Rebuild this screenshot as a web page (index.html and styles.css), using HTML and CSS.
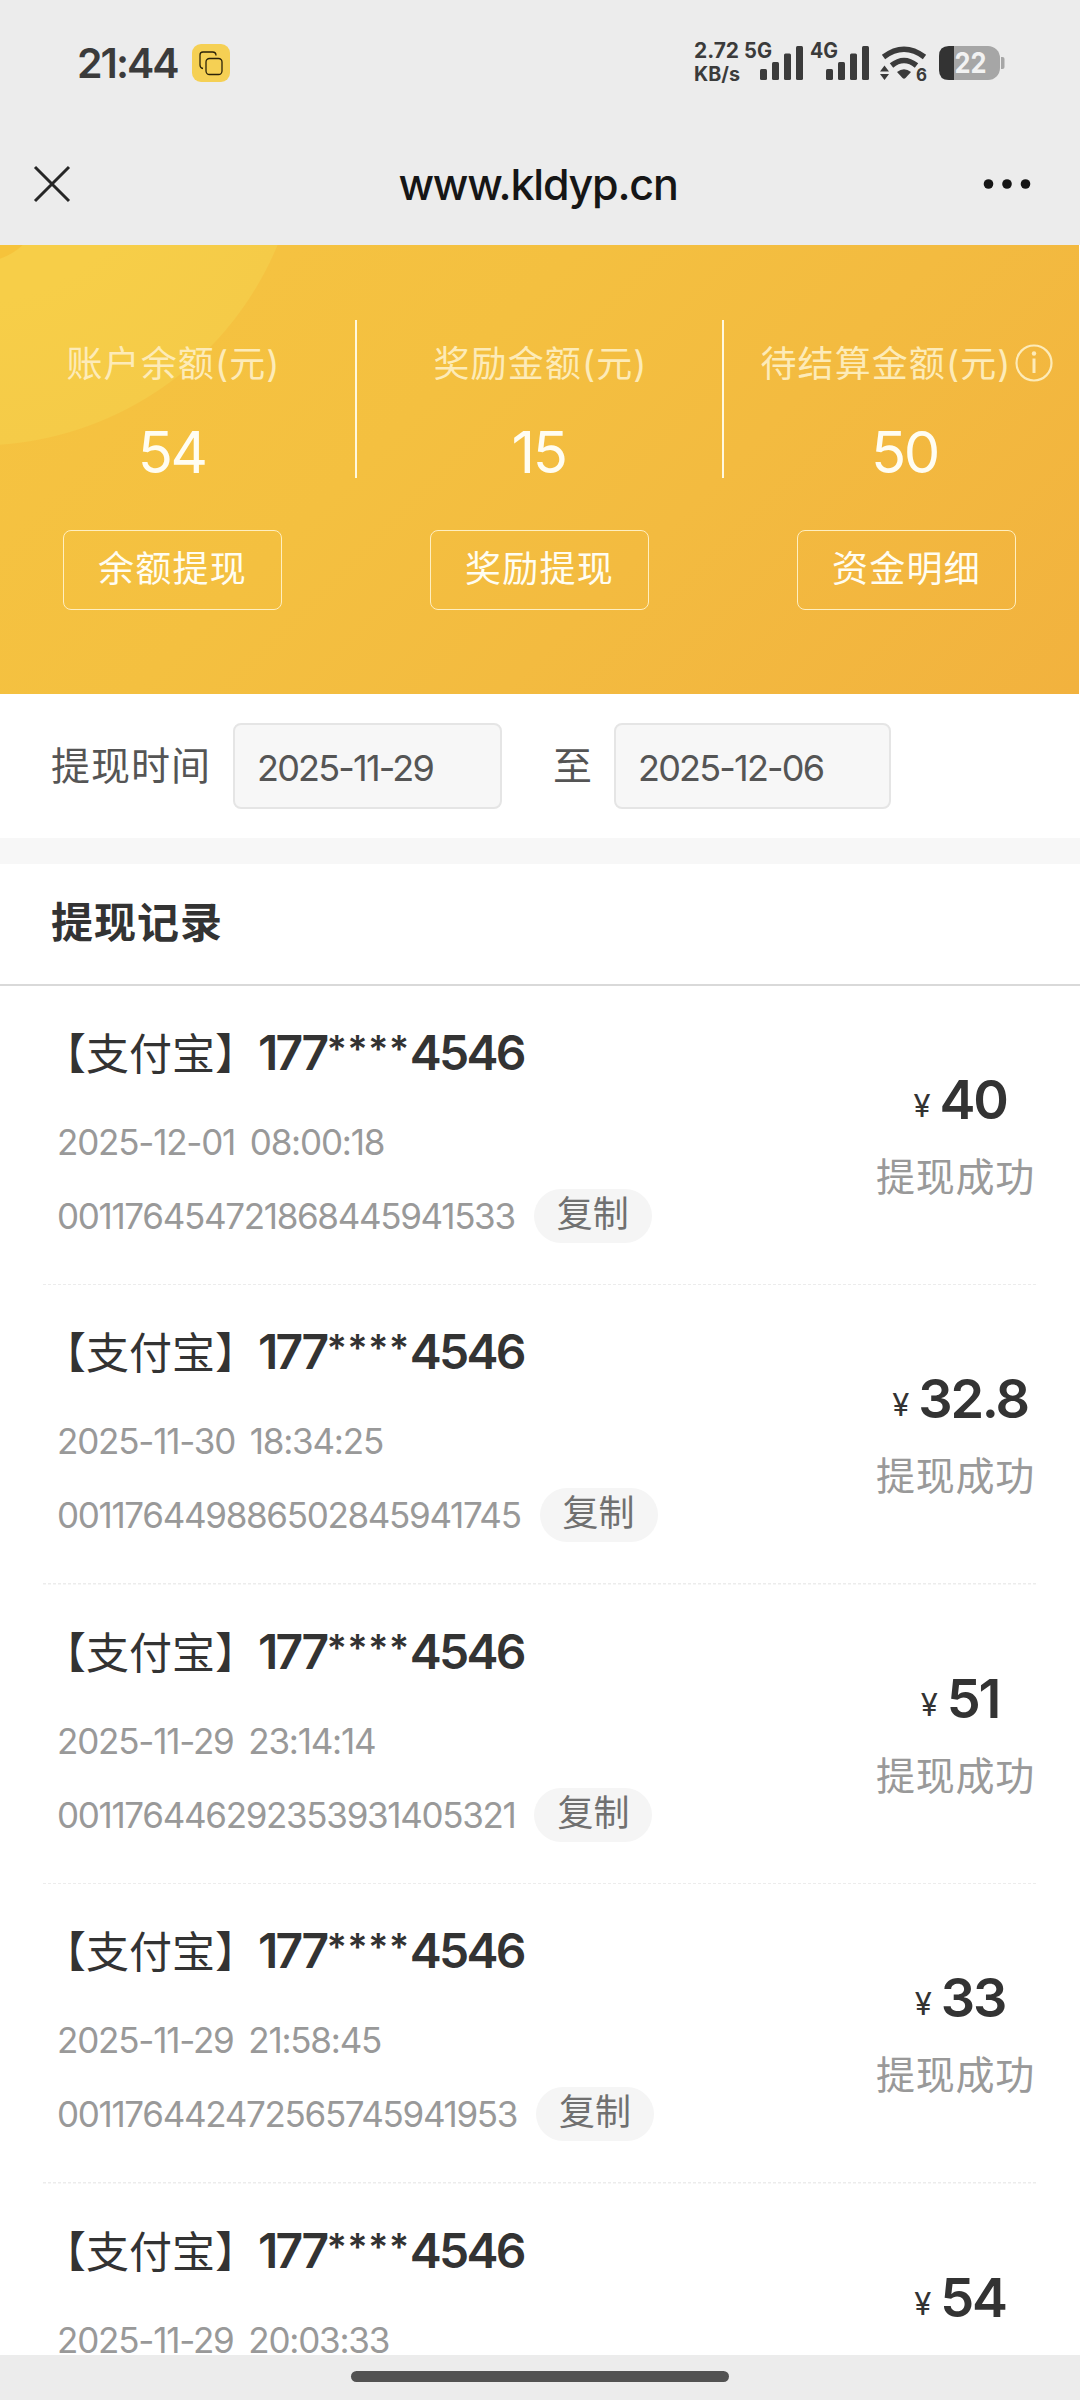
FILE: index.html
```html
<!DOCTYPE html>
<html lang="zh-CN">
<head>
<meta charset="utf-8">
<title>提现记录</title>
<link rel="stylesheet" href="styles.css">
</head>
<body>
<div class="screen">
  <header class="top">
    <div class="status">
      <div class="clock">
        <span class="time">21:44</span>
        <svg class="badge" width="38" height="38" viewBox="0 0 38 38"><rect width="38" height="38" rx="9" fill="#f5d054"/><g fill="none" stroke="#2b2208" stroke-width="1.3"><path d="M11 24.5q-3-.5-3-3.500V11q0-3 3-3h9.500q3.500 0 3.500 3.500"/><rect x="14" y="14.500" width="16" height="16" rx="3.500"/></g></svg>
      </div>
      <svg class="signals" width="320" height="50" viewBox="690 38 320 50">
        <g fill="#3b3b3b" font-family="Inter, sans-serif" font-weight="700" font-size="21">
          <text x="694" y="57.500" textLength="45" lengthAdjust="spacingAndGlyphs">2.72</text>
          <text x="694" y="80.500" font-size="19.500" textLength="46" lengthAdjust="spacingAndGlyphs">KB/s</text>
          <text x="744" y="57.500" textLength="28" lengthAdjust="spacingAndGlyphs">5G</text>
          <text x="810" y="57.500" textLength="28" lengthAdjust="spacingAndGlyphs">4G</text>
          <text x="916" y="81" font-size="17.500" textLength="11" lengthAdjust="spacingAndGlyphs">6</text>
        </g>
        <g fill="#3b3b3b">
          <rect x="760" y="69" width="7" height="11" rx="1.500"/><rect x="772" y="62" width="7" height="18" rx="1.500"/><rect x="784" y="53.500" width="7" height="26.500" rx="1.500"/><rect x="796" y="46" width="7" height="34" rx="1.500"/>
          <rect x="826" y="69" width="7" height="11" rx="1.500"/><rect x="838" y="62" width="7" height="18" rx="1.500"/><rect x="850" y="53.500" width="7" height="26.500" rx="1.500"/><rect x="862" y="46" width="7" height="34" rx="1.500"/>
          <path d="M897 72q7-5.500 14 0l-5.500 6q-1.500 1.500-3 0z"/>
          <path d="M884.500 65.500l4.500 6h-9zM880 74h9l-4.500 6z"/>
        </g>
        <g fill="none" stroke="#3b3b3b" stroke-width="5.500"><path d="M883.500 57Q904 41.500 924.500 57"/><path d="M891.500 65.500q12.500-10 25 0"/></g>
        <rect x="939" y="46" width="61" height="34" rx="12" fill="#a6a6a6"/>
        <path d="M1001 57h1.500q2 0 2 2v8q0 2-2 2H1001z" fill="#a6a6a6"/>
        <path d="M954 46h-5q-10 0-10 10v14q0 10 10 10h5z" fill="#333"/>
        <text x="954.500" y="73" font-family="Inter, sans-serif" font-weight="700" font-size="28.500" fill="#f2f2f2" textLength="32" lengthAdjust="spacingAndGlyphs">22</text>
      </svg>
    </div>
    <div class="nav">
      <svg width="38" height="38" viewBox="0 0 38 38"><path d="M2 2l34 34M36 2L2 36" stroke="#262626" stroke-width="3"/></svg>
      <span class="url">www.kldyp.cn</span>
      <svg width="48" height="12" viewBox="0 0 48 12" fill="#161616"><circle cx="5.500" cy="6" r="4.800"/><circle cx="24" cy="6" r="4.800"/><circle cx="42.500" cy="6" r="4.800"/></svg>
    </div>
  </header>

  <section class="balance">
    <div class="account"><div class="figures"><span class="label">账户余额(元)</span><span class="amount">54</span></div><span class="button">余额提现</span></div>
    <div class="account"><div class="figures"><span class="label">奖励金额(元)</span><span class="amount">15</span></div><span class="button">奖励提现</span></div>
    <div class="account"><div class="figures"><span class="label">待结算金额(元)<svg class="info" width="38" height="38" viewBox="0 0 38 38"><circle cx="19" cy="19" r="17.500" fill="none" stroke="#fdebb8" stroke-width="2.200"/><circle cx="19" cy="9.500" r="2.200" fill="#fdebb8"/><path d="M19 14.500v14.500" stroke="#fdebb8" stroke-width="3"/></svg></span><span class="amount">50</span></div><span class="button">资金明细</span></div>
  </section>

  <section class="filter">
    <span>提现时间</span>
    <span class="date from">2025-11-29</span>
    <span class="to">至</span>
    <span class="date until">2025-12-06</span>
  </section>

  <h1 class="heading">提现记录</h1>

  <main class="records">
    <article class="record">
      <div class="detail"><div class="payee">【支付宝】<b>177<i>****</i>4546</b></div><div class="when">2025-12-01 08:00:18</div><div class="order"><span>001176454721868445941533</span><span class="copy">复制</span></div></div>
      <div class="result"><div class="sum"><span>¥</span><b>40</b></div><div class="state">提现成功</div></div>
    </article>
    <article class="record">
      <div class="detail"><div class="payee">【支付宝】<b>177<i>****</i>4546</b></div><div class="when">2025-11-30 18:34:25</div><div class="order"><span>001176449886502845941745</span><span class="copy">复制</span></div></div>
      <div class="result"><div class="sum"><span>¥</span><b>32.8</b></div><div class="state">提现成功</div></div>
    </article>
    <article class="record">
      <div class="detail"><div class="payee">【支付宝】<b>177<i>****</i>4546</b></div><div class="when">2025-11-29 23:14:14</div><div class="order"><span>001176446292353931405321</span><span class="copy">复制</span></div></div>
      <div class="result"><div class="sum"><span>¥</span><b>51</b></div><div class="state">提现成功</div></div>
    </article>
    <article class="record">
      <div class="detail"><div class="payee">【支付宝】<b>177<i>****</i>4546</b></div><div class="when">2025-11-29 21:58:45</div><div class="order"><span>001176442472565745941953</span><span class="copy">复制</span></div></div>
      <div class="result"><div class="sum"><span>¥</span><b>33</b></div><div class="state">提现成功</div></div>
    </article>
    <article class="record">
      <div class="detail"><div class="payee">【支付宝】<b>177<i>****</i>4546</b></div><div class="when">2025-11-29 20:03:33</div></div>
      <div class="result"><div class="sum"><span>¥</span><b>54</b></div></div>
    </article>
  </main>

  <footer class="home"><div class="handle"></div></footer>
</div>
</body>
</html>
```
FILE: styles.css
```css
* { box-sizing: border-box; }
body { margin: 0; background: #fff; }
.screen {
  width: 1080px; height: 2400px; overflow: hidden;
  display: flex; flex-direction: column;
  font-family: Inter, "Noto Sans CJK SC", sans-serif;
  color: #333; white-space: nowrap;
}
.top { height: 245px; flex: none; background: #ececec; }
.status { height: 126px; padding: 0 70px 0 77px; display: flex; justify-content: space-between; align-items: center; }
.clock { display: flex; align-items: center; width: 153px; justify-content: space-between; }
.time { font-size: 41px; font-weight: 600; letter-spacing: -2px; color: #3b3b3b; line-height: 1; }
.nav { height: 116px; padding: 0 49px 0 33px; display: flex; justify-content: space-between; align-items: center; }
.nav svg { margin-top: -1px; }
.url { font-size: 43px; font-weight: 500; letter-spacing: -1.200px; color: #161616; line-height: 1; padding-left: 22px; }

.balance {
  height: 449px; flex: none; padding-top: 75px; margin-right: 1px; overflow: hidden;
  display: grid; grid-template-columns: repeat(3, 367px); justify-content: center;
  background:
    radial-gradient(circle at -20px -45px, #f6c33b 61.5px, transparent 62.5px),
    radial-gradient(circle at -23px -125px, #f7ce48 180px, #f5cb48 325px, transparent 326px),
    linear-gradient(135deg, #f6c441 0%, #f4c040 38%, #f3bb40 62%, #f2b23e 100%);
}
.account { display: flex; flex-direction: column; align-items: center; color: #fffdf2; }
.figures { width: 369px; height: 158px; padding-left: 4px; display: flex; flex-direction: column; align-items: center; border-right: 2px solid #fff8de; }
.account:last-child .figures { border: 0; padding-left: 0; }
.label { height: 82px; flex: none; display: flex; align-items: center; font-size: 36px; letter-spacing: 1.100px; color: #fdebb8; }
.info { margin-left: 3px; margin-top: 3px; }
.amount { height: 70px; flex: none; line-height: 70px; font-size: 58px; margin-top: 15px; margin-right: 4px; letter-spacing: -2.500px; }
.button { width: 219px; height: 80px; margin-top: 52px; border: 1.5px solid #ffefc0; border-radius: 8px; line-height: 77px; text-align: center; font-size: 36px; letter-spacing: 1.3px; }

.filter { height: 144px; flex: none; padding-left: 51px; display: flex; align-items: center; font-size: 39px; letter-spacing: 1px; color: #555; }
.filter > span:nth-child(odd) { margin-top: -7px; }
.date { height: 86px; border: 2px solid #e5e5e5; border-radius: 8px; background: #f7f7f7; padding-left: 22px; line-height: 86px; font-size: 36px; letter-spacing: -1.8px; }
.from { width: 269px; margin-left: 22px; }
.to { margin-left: 51px; }
.until { width: 277px; margin-left: 21px; }

.heading { height: 148px; flex: none; margin: 0; padding-left: 51px; border-top: 26px solid #f7f7f7; border-bottom: 2px solid #d9d9d9; line-height: 118px; font-size: 42px; font-weight: 600; letter-spacing: 1px; }

.records { flex: 1; min-height: 0; overflow: hidden; padding: 0 43px; }
.record {
  height: 299.400px; display: flex; justify-content: space-between;
  background: repeating-linear-gradient(90deg, #ececec 0 3px, transparent 3px 5px) left bottom / 100% 1.500px no-repeat;
}
.detail { padding: 31px 0 0; }
.payee { height: 72px; line-height: 72px; font-size: 43px; letter-spacing: 0; }
.payee b { font-size: 48px; font-weight: 600; letter-spacing: -2.700px; }
.payee i { font-size: 38px; font-style: normal; letter-spacing: .3px; line-height: 1; vertical-align: 7px; }
.when, .order { padding-left: 14px; font-size: 35px; color: #999; }
.when { height: 73px; padding-top: 35px; line-height: 36px; letter-spacing: -1.200px; word-spacing: 6px; }
.order { height: 54px; display: flex; align-items: center; gap: 19px; margin-top: 27px; letter-spacing: -1.320px; }
.copy { height: 54px; width: 118px; border-radius: 27px; background: #f5f5f5; color: #707070; text-align: center; line-height: 51px; font-size: 36px; letter-spacing: 0; }
.result { width: 163px; padding-top: 70px; text-align: center; }
.sum { height: 88px; line-height: 88px; display: flex; justify-content: center; align-items: baseline; gap: 9px; margin-left: 9px; }
.sum span { font-size: 31px; position: relative; top: -2px; }
.sum b { font-size: 54px; font-weight: 600; letter-spacing: -2.200px; }
.state { line-height: 66px; font-size: 39px; letter-spacing: .7px; color: #999; }

.home { height: 45px; flex: none; background: #ececec; display: flex; justify-content: center; padding-top: 16px; }
.handle { width: 378px; height: 11px; border-radius: 6px; background: #525252; }
```
